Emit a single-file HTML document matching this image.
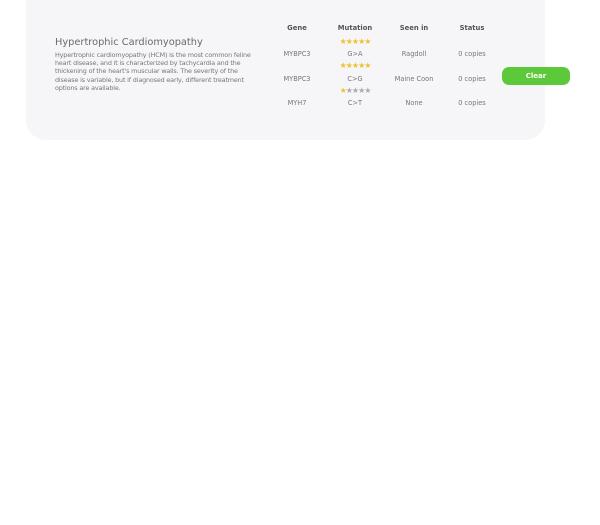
<!DOCTYPE html><html><head><style>
body{margin:0;width:600px;height:525px;background:#fff;font-family:"DejaVu Sans","Liberation Sans",sans-serif;position:relative;overflow:hidden}
.card{position:absolute;left:26px;top:-20px;width:519px;height:160px;background:#f6f6f8;border-radius:20px}
h1{position:absolute;left:55px;top:37px;margin:0;font-size:9.8px;font-weight:normal;color:#6a6a6a}
p{position:absolute;left:55px;top:51px;margin:0;font-size:6.4px;line-height:8.2px;color:#777;white-space:nowrap;letter-spacing:-0.15px}
.c{position:absolute;transform:translateX(-50%);font-size:6.6px;color:#777;white-space:nowrap}
.h{color:#555;font-weight:bold;font-size:6.8px}
.s{font-size:8px;letter-spacing:-1px;color:#f0c030}
.g{color:#aaa}
.btn{position:absolute;left:502px;top:67px;width:68px;height:18px;background:#5cc93a;border-radius:7px;color:#fff;font-size:7px;font-weight:bold;text-align:center;line-height:18px}
</style></head><body>
<div class="card"></div>
<h1>Hypertrophic Cardiomyopathy</h1>
<p>Hypertrophic cardiomyopathy (HCM) is the most common feline<br>heart disease, and it is characterized by tachycardia and the<br>thickening of the heart's muscular walls. The severity of the<br>disease is variable, but if diagnosed early, different treatment<br>options are available.</p>
<div class="c h" style="left:297px;top:24px">Gene</div>
<div class="c h" style="left:355px;top:24px">Mutation</div>
<div class="c h" style="left:414px;top:24px">Seen in</div>
<div class="c h" style="left:472px;top:24px">Status</div>
<div class="c s" style="left:355px;top:37px">★★★★★</div>
<div class="c" style="left:297px;top:50px">MYBPC3</div>
<div class="c" style="left:355px;top:50px">G&gt;A</div>
<div class="c" style="left:414px;top:50px">Ragdoll</div>
<div class="c" style="left:472px;top:50px">0 copies</div>
<div class="c s" style="left:355px;top:61px">★★★★★</div>
<div class="c" style="left:297px;top:75px">MYBPC3</div>
<div class="c" style="left:355px;top:75px">C&gt;G</div>
<div class="c" style="left:414px;top:75px">Maine Coon</div>
<div class="c" style="left:472px;top:75px">0 copies</div>
<div class="c s" style="left:355px;top:86px">★<span class="g">★★★★</span></div>
<div class="c" style="left:297px;top:99px">MYH7</div>
<div class="c" style="left:355px;top:99px">C&gt;T</div>
<div class="c" style="left:414px;top:99px">None</div>
<div class="c" style="left:472px;top:99px">0 copies</div>
<div class="btn">Clear</div>
</body></html>
